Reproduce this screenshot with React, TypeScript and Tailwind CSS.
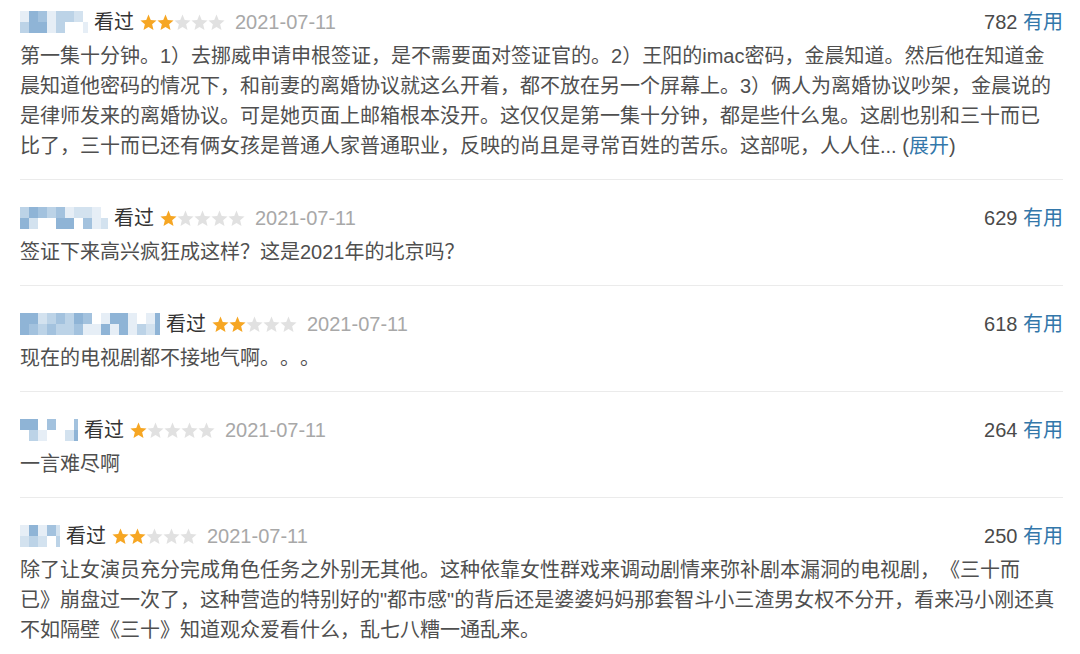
import React from "react";

const shades = [
  "bg-[#ffffff]",
  "bg-[#e6eef6]",
  "bg-[#d3e2ef]",
  "bg-[#bcd3e7]",
  "bg-[#a3c2de]",
  "bg-[#8fb4d6]",
];

type Review = {
  nameWidth: number;
  seed: number;
  stars: number;
  votes: number;
  lines: React.ReactNode[];
};

const reviews: Review[] = [
  {
    nameWidth: 68,
    seed: 3,
    stars: 2,
    votes: 782,
    lines: [
      "第一集十分钟。1）去挪威申请申根签证，是不需要面对签证官的。2）王阳的imac密码，金晨知道。然后他在知道金",
      "晨知道他密码的情况下，和前妻的离婚协议就这么开着，都不放在另一个屏幕上。3）俩人为离婚协议吵架，金晨说的",
      "是律师发来的离婚协议。可是她页面上邮箱根本没开。这仅仅是第一集十分钟，都是些什么鬼。这剧也别和三十而已",
      <>
        比了，三十而已还有俩女孩是普通人家普通职业，反映的尚且是寻常百姓的苦乐。这部呢，人人住... (
        <span className="text-[#3377aa]">展开</span>)
      </>,
    ],
  },
  {
    nameWidth: 88,
    seed: 7,
    stars: 1,
    votes: 629,
    lines: ["签证下来高兴疯狂成这样？这是2021年的北京吗？"],
  },
  {
    nameWidth: 140,
    seed: 11,
    stars: 2,
    votes: 618,
    lines: ["现在的电视剧都不接地气啊。。。"],
  },
  {
    nameWidth: 58,
    seed: 5,
    stars: 1,
    votes: 264,
    lines: ["一言难尽啊"],
  },
  {
    nameWidth: 40,
    seed: 9,
    stars: 2,
    votes: 250,
    lines: [
      "除了让女演员充分完成角色任务之外别无其他。这种依靠女性群戏来调动剧情来弥补剧本漏洞的电视剧，《三十而",
      "已》崩盘过一次了，这种营造的特别好的\"都市感\"的背后还是婆婆妈妈那套智斗小三渣男女权不分开，看来冯小刚还真",
      "不如隔壁《三十》知道观众爱看什么，乱七八糟一通乱来。",
    ],
  },
];

// blurred user name, drawn as a soft mosaic
function Mosaic({ width, seed }: { width: number; seed: number }) {
  const cols = Math.ceil(width / 9);
  const cells: number[] = [];
  let s = seed * 97 + 13;
  for (let i = 0; i < cols * 2; i++) {
    s = (s * 1103515245 + 12345) % 2147483648;
    cells.push(Math.floor((s / 2147483648) * 6));
  }
  return (
    <div
      className="grid grid-rows-2 overflow-hidden h-[22px] shrink-0 blur-[0.7px]"
      style={{ width, gridTemplateColumns: `repeat(${cols}, 9px)` }}
    >
      {cells.map((c, i) => (
        <div key={i} className={shades[c]} />
      ))}
    </div>
  );
}

function Star({ on }: { on: boolean }) {
  return (
    <svg viewBox="0 0 24 24" className="w-[17px] h-[17px]">
      <path
        d="M12 0.8L15.18 8.43L23.41 9.09L17.14 14.47L19.05 22.51L12 18.2L4.95 22.51L6.86 14.47L0.59 9.09L8.82 8.43Z"
        fill={on ? "#f6a623" : "#e1e1e1"}
      />
    </svg>
  );
}

export default function App() {
  return (
    <div
      className="w-[1080px] h-[654px] bg-white overflow-hidden px-5 text-[20px] [text-spacing-trim:space-all]"
      style={{ fontFamily: '"Liberation Sans", "Noto Sans CJK SC", sans-serif' }}
    >
      {reviews.map((r, idx) => (
        <div
          key={idx}
          className={`${idx === 0 ? "pt-[7px]" : "pt-[23px]"} pb-[18px] ${
            idx < reviews.length - 1 ? "border-b border-[#ebebeb]" : ""
          } w-[1043px]`}
        >
          <div className="flex items-center h-[30px]">
            <Mosaic width={r.nameWidth} seed={r.seed} />
            <span className="ml-[6px] text-[#333333]">看过</span>
            <div className="flex ml-[6px]">
              {[0, 1, 2, 3, 4].map((i) => (
                <Star key={i} on={i < r.stars} />
              ))}
            </div>
            <span className="ml-[10px] text-[#a8a8a8]">2021-07-11</span>
            <div className="ml-auto">
              <span className="text-[#4a4a4a]">{r.votes}</span>{" "}
              <span className="text-[#3377aa]">有用</span>
            </div>
          </div>
          <div className="mt-[4px] text-[#4f4f4f] leading-[30px]">
            {r.lines.map((l, i) => (
              <div key={i} className="whitespace-nowrap">
                {l}
              </div>
            ))}
          </div>
        </div>
      ))}
    </div>
  );
}
